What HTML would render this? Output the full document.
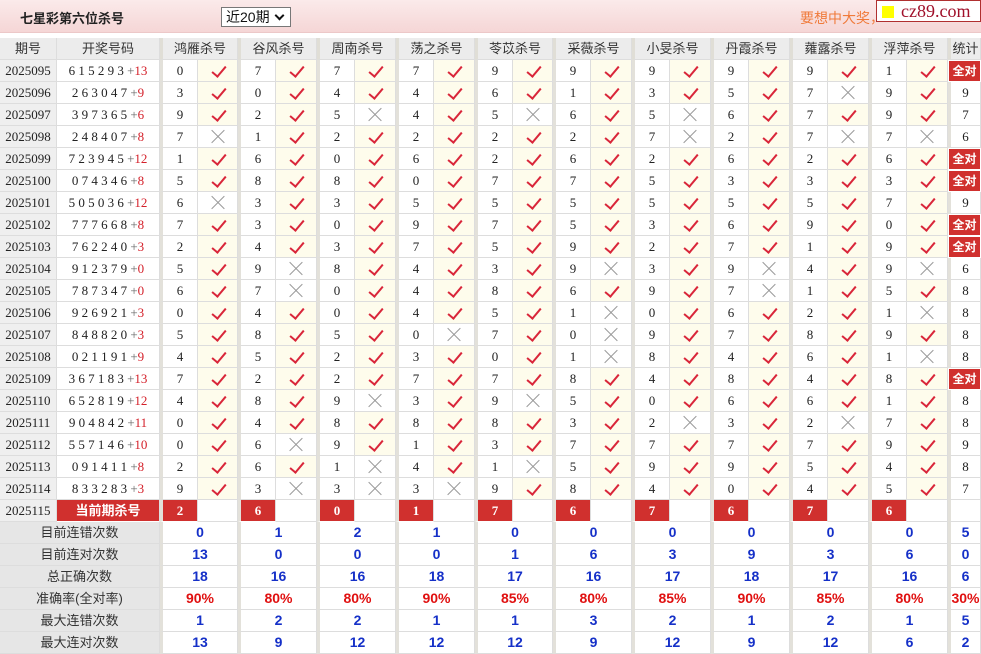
<!DOCTYPE html>
<html><head><meta charset="utf-8">
<style>
*{margin:0;padding:0}
body{width:981px;height:654px;overflow:hidden;background:#fff;font-family:"Liberation Sans","Noto Sans CJK SC",sans-serif;position:relative}
.top{position:absolute;left:0;top:0;width:981px;height:33px;background:linear-gradient(#fbeaea,#f5d6d6);border-bottom:1px solid #ecc8c8;box-sizing:border-box}
.title{position:absolute;left:20px;top:8px;font-size:13px;font-weight:bold;color:#222}
.sel{position:absolute;left:221px;top:7px;width:70px;height:20px;box-sizing:border-box;border:1px solid #777;background:#fff;font-size:14px;line-height:18px;padding-left:4px;color:#111}
.sel:after{content:"";position:absolute;right:7px;top:4px;width:5px;height:5px;border:solid #111;border-width:0 2px 2px 0;transform:rotate(45deg)}
.ad{position:absolute;left:800px;top:8px;font-size:14px;color:#f07a3a}
.logo{position:absolute;left:876px;top:0;width:105px;height:22px;box-sizing:border-box;border:1px solid #b03030;background:#fff;font:18px "Liberation Serif",serif;color:#a0102a;line-height:20px;padding-left:24px}
.logo:before{content:"";position:absolute;left:5px;top:5px;width:12px;height:12px;background:#ff0}
.tb{position:absolute;left:0;top:38px}
.r{display:grid;grid-template-columns:57px 103px 38px 40px 38px 41px 38px 41px 38px 41px 38px 40px 38px 41px 38px 41px 38px 41px 38px 41px 38px 41px 33px;height:22px}
.r>i{font-style:normal;box-sizing:border-box;border-right:1px solid #ddd;border-bottom:1px solid #ddd;height:22px;line-height:21px;text-align:center;font-size:13px;font-family:"Liberation Serif","Noto Serif CJK SC",serif;color:#222;position:relative;overflow:hidden;white-space:pre}
.h>i{background:#ececec;font-family:"Liberation Sans","Noto Sans CJK SC",sans-serif!important;color:#333}
.h>i.g{grid-column:span 2;border-left:3px solid #e0ded6}
.h>i.t{border-left:3px solid #e0ded6}
.p{background:#efefef}
.k{letter-spacing:0}
.k em{font-style:normal;color:#d4202a}
.k s{text-decoration:none;color:#666}
.n{border-left:3px solid #e3e1da}
.y{background:#fefcec}
.y:after{content:"";position:absolute;left:17px;top:3px;width:6px;height:12px;border:solid #d9263a;border-width:0 2px 2px 0;transform:rotate(40deg)}
.x:before,.x:after{content:"";position:absolute;left:11px;top:10px;width:18px;height:1px;background:#9a9a9a;transform:rotate(45deg)}
.x:after{transform:rotate(-45deg)}
.s{border-left:3px solid #e3e1da}
.q{background:#d0302e!important;color:#fff!important;font-weight:bold;font-family:"Liberation Sans","Noto Sans CJK SC",sans-serif!important;font-size:12px!important;border:1px solid #fff!important}
.c{background:#d0302e!important;color:#fff!important;font-weight:bold;border-bottom:1px solid #fff!important}
.kc{font-family:"Liberation Sans","Noto Sans CJK SC",sans-serif!important}
.st>i{font-family:"Liberation Sans",sans-serif!important;font-weight:bold;color:#1530c8!important;font-size:14px!important;grid-column:span 2}
.st>i.lb{background:#e6e6e6;color:#333!important;font-weight:normal;font-family:"Liberation Sans","Noto Sans CJK SC",sans-serif!important;font-size:13px!important}
.st>i.v{border-left:3px solid #e3e1da}
.st>i.z{grid-column:span 1;border-left:3px solid #e3e1da}
.rd>i.v,.rd>i.z{color:#e01010!important}
</style></head><body>
<div class="top"><div class="title">七星彩第六位杀号</div><div class="sel">近20期</div><div class="ad">要想中大奖，</div><div class="logo">cz89.com</div></div>
<div class="tb">
<div class="r h"><i>期号</i><i>开奖号码</i><i class="g">鸿雁杀号</i><i class="g">谷风杀号</i><i class="g">周南杀号</i><i class="g">荡之杀号</i><i class="g">苓苡杀号</i><i class="g">采薇杀号</i><i class="g">小旻杀号</i><i class="g">丹霞杀号</i><i class="g">蕹露杀号</i><i class="g">浮萍杀号</i><i class="t">统计</i></div>
<div class="r"><i class="p">2025095</i><i class="k">6 1 5 2 9 3 <s>+</s><em>13</em></i><i class="n">0</i><i class="y"></i><i class="n">7</i><i class="y"></i><i class="n">7</i><i class="y"></i><i class="n">7</i><i class="y"></i><i class="n">9</i><i class="y"></i><i class="n">9</i><i class="y"></i><i class="n">9</i><i class="y"></i><i class="n">9</i><i class="y"></i><i class="n">9</i><i class="y"></i><i class="n">1</i><i class="y"></i><i class="s q">全对</i></div>
<div class="r"><i class="p">2025096</i><i class="k">2 6 3 0 4 7 <s>+</s><em>9</em></i><i class="n">3</i><i class="y"></i><i class="n">0</i><i class="y"></i><i class="n">4</i><i class="y"></i><i class="n">4</i><i class="y"></i><i class="n">6</i><i class="y"></i><i class="n">1</i><i class="y"></i><i class="n">3</i><i class="y"></i><i class="n">5</i><i class="y"></i><i class="n">7</i><i class="x"></i><i class="n">9</i><i class="y"></i><i class="s">9</i></div>
<div class="r"><i class="p">2025097</i><i class="k">3 9 7 3 6 5 <s>+</s><em>6</em></i><i class="n">9</i><i class="y"></i><i class="n">2</i><i class="y"></i><i class="n">5</i><i class="x"></i><i class="n">4</i><i class="y"></i><i class="n">5</i><i class="x"></i><i class="n">6</i><i class="y"></i><i class="n">5</i><i class="x"></i><i class="n">6</i><i class="y"></i><i class="n">7</i><i class="y"></i><i class="n">9</i><i class="y"></i><i class="s">7</i></div>
<div class="r"><i class="p">2025098</i><i class="k">2 4 8 4 0 7 <s>+</s><em>8</em></i><i class="n">7</i><i class="x"></i><i class="n">1</i><i class="y"></i><i class="n">2</i><i class="y"></i><i class="n">2</i><i class="y"></i><i class="n">2</i><i class="y"></i><i class="n">2</i><i class="y"></i><i class="n">7</i><i class="x"></i><i class="n">2</i><i class="y"></i><i class="n">7</i><i class="x"></i><i class="n">7</i><i class="x"></i><i class="s">6</i></div>
<div class="r"><i class="p">2025099</i><i class="k">7 2 3 9 4 5 <s>+</s><em>12</em></i><i class="n">1</i><i class="y"></i><i class="n">6</i><i class="y"></i><i class="n">0</i><i class="y"></i><i class="n">6</i><i class="y"></i><i class="n">2</i><i class="y"></i><i class="n">6</i><i class="y"></i><i class="n">2</i><i class="y"></i><i class="n">6</i><i class="y"></i><i class="n">2</i><i class="y"></i><i class="n">6</i><i class="y"></i><i class="s q">全对</i></div>
<div class="r"><i class="p">2025100</i><i class="k">0 7 4 3 4 6 <s>+</s><em>8</em></i><i class="n">5</i><i class="y"></i><i class="n">8</i><i class="y"></i><i class="n">8</i><i class="y"></i><i class="n">0</i><i class="y"></i><i class="n">7</i><i class="y"></i><i class="n">7</i><i class="y"></i><i class="n">5</i><i class="y"></i><i class="n">3</i><i class="y"></i><i class="n">3</i><i class="y"></i><i class="n">3</i><i class="y"></i><i class="s q">全对</i></div>
<div class="r"><i class="p">2025101</i><i class="k">5 0 5 0 3 6 <s>+</s><em>12</em></i><i class="n">6</i><i class="x"></i><i class="n">3</i><i class="y"></i><i class="n">3</i><i class="y"></i><i class="n">5</i><i class="y"></i><i class="n">5</i><i class="y"></i><i class="n">5</i><i class="y"></i><i class="n">5</i><i class="y"></i><i class="n">5</i><i class="y"></i><i class="n">5</i><i class="y"></i><i class="n">7</i><i class="y"></i><i class="s">9</i></div>
<div class="r"><i class="p">2025102</i><i class="k">7 7 7 6 6 8 <s>+</s><em>8</em></i><i class="n">7</i><i class="y"></i><i class="n">3</i><i class="y"></i><i class="n">0</i><i class="y"></i><i class="n">9</i><i class="y"></i><i class="n">7</i><i class="y"></i><i class="n">5</i><i class="y"></i><i class="n">3</i><i class="y"></i><i class="n">6</i><i class="y"></i><i class="n">9</i><i class="y"></i><i class="n">0</i><i class="y"></i><i class="s q">全对</i></div>
<div class="r"><i class="p">2025103</i><i class="k">7 6 2 2 4 0 <s>+</s><em>3</em></i><i class="n">2</i><i class="y"></i><i class="n">4</i><i class="y"></i><i class="n">3</i><i class="y"></i><i class="n">7</i><i class="y"></i><i class="n">5</i><i class="y"></i><i class="n">9</i><i class="y"></i><i class="n">2</i><i class="y"></i><i class="n">7</i><i class="y"></i><i class="n">1</i><i class="y"></i><i class="n">9</i><i class="y"></i><i class="s q">全对</i></div>
<div class="r"><i class="p">2025104</i><i class="k">9 1 2 3 7 9 <s>+</s><em>0</em></i><i class="n">5</i><i class="y"></i><i class="n">9</i><i class="x"></i><i class="n">8</i><i class="y"></i><i class="n">4</i><i class="y"></i><i class="n">3</i><i class="y"></i><i class="n">9</i><i class="x"></i><i class="n">3</i><i class="y"></i><i class="n">9</i><i class="x"></i><i class="n">4</i><i class="y"></i><i class="n">9</i><i class="x"></i><i class="s">6</i></div>
<div class="r"><i class="p">2025105</i><i class="k">7 8 7 3 4 7 <s>+</s><em>0</em></i><i class="n">6</i><i class="y"></i><i class="n">7</i><i class="x"></i><i class="n">0</i><i class="y"></i><i class="n">4</i><i class="y"></i><i class="n">8</i><i class="y"></i><i class="n">6</i><i class="y"></i><i class="n">9</i><i class="y"></i><i class="n">7</i><i class="x"></i><i class="n">1</i><i class="y"></i><i class="n">5</i><i class="y"></i><i class="s">8</i></div>
<div class="r"><i class="p">2025106</i><i class="k">9 2 6 9 2 1 <s>+</s><em>3</em></i><i class="n">0</i><i class="y"></i><i class="n">4</i><i class="y"></i><i class="n">0</i><i class="y"></i><i class="n">4</i><i class="y"></i><i class="n">5</i><i class="y"></i><i class="n">1</i><i class="x"></i><i class="n">0</i><i class="y"></i><i class="n">6</i><i class="y"></i><i class="n">2</i><i class="y"></i><i class="n">1</i><i class="x"></i><i class="s">8</i></div>
<div class="r"><i class="p">2025107</i><i class="k">8 4 8 8 2 0 <s>+</s><em>3</em></i><i class="n">5</i><i class="y"></i><i class="n">8</i><i class="y"></i><i class="n">5</i><i class="y"></i><i class="n">0</i><i class="x"></i><i class="n">7</i><i class="y"></i><i class="n">0</i><i class="x"></i><i class="n">9</i><i class="y"></i><i class="n">7</i><i class="y"></i><i class="n">8</i><i class="y"></i><i class="n">9</i><i class="y"></i><i class="s">8</i></div>
<div class="r"><i class="p">2025108</i><i class="k">0 2 1 1 9 1 <s>+</s><em>9</em></i><i class="n">4</i><i class="y"></i><i class="n">5</i><i class="y"></i><i class="n">2</i><i class="y"></i><i class="n">3</i><i class="y"></i><i class="n">0</i><i class="y"></i><i class="n">1</i><i class="x"></i><i class="n">8</i><i class="y"></i><i class="n">4</i><i class="y"></i><i class="n">6</i><i class="y"></i><i class="n">1</i><i class="x"></i><i class="s">8</i></div>
<div class="r"><i class="p">2025109</i><i class="k">3 6 7 1 8 3 <s>+</s><em>13</em></i><i class="n">7</i><i class="y"></i><i class="n">2</i><i class="y"></i><i class="n">2</i><i class="y"></i><i class="n">7</i><i class="y"></i><i class="n">7</i><i class="y"></i><i class="n">8</i><i class="y"></i><i class="n">4</i><i class="y"></i><i class="n">8</i><i class="y"></i><i class="n">4</i><i class="y"></i><i class="n">8</i><i class="y"></i><i class="s q">全对</i></div>
<div class="r"><i class="p">2025110</i><i class="k">6 5 2 8 1 9 <s>+</s><em>12</em></i><i class="n">4</i><i class="y"></i><i class="n">8</i><i class="y"></i><i class="n">9</i><i class="x"></i><i class="n">3</i><i class="y"></i><i class="n">9</i><i class="x"></i><i class="n">5</i><i class="y"></i><i class="n">0</i><i class="y"></i><i class="n">6</i><i class="y"></i><i class="n">6</i><i class="y"></i><i class="n">1</i><i class="y"></i><i class="s">8</i></div>
<div class="r"><i class="p">2025111</i><i class="k">9 0 4 8 4 2 <s>+</s><em>11</em></i><i class="n">0</i><i class="y"></i><i class="n">4</i><i class="y"></i><i class="n">8</i><i class="y"></i><i class="n">8</i><i class="y"></i><i class="n">8</i><i class="y"></i><i class="n">3</i><i class="y"></i><i class="n">2</i><i class="x"></i><i class="n">3</i><i class="y"></i><i class="n">2</i><i class="x"></i><i class="n">7</i><i class="y"></i><i class="s">8</i></div>
<div class="r"><i class="p">2025112</i><i class="k">5 5 7 1 4 6 <s>+</s><em>10</em></i><i class="n">0</i><i class="y"></i><i class="n">6</i><i class="x"></i><i class="n">9</i><i class="y"></i><i class="n">1</i><i class="y"></i><i class="n">3</i><i class="y"></i><i class="n">7</i><i class="y"></i><i class="n">7</i><i class="y"></i><i class="n">7</i><i class="y"></i><i class="n">7</i><i class="y"></i><i class="n">9</i><i class="y"></i><i class="s">9</i></div>
<div class="r"><i class="p">2025113</i><i class="k">0 9 1 4 1 1 <s>+</s><em>8</em></i><i class="n">2</i><i class="y"></i><i class="n">6</i><i class="y"></i><i class="n">1</i><i class="x"></i><i class="n">4</i><i class="y"></i><i class="n">1</i><i class="x"></i><i class="n">5</i><i class="y"></i><i class="n">9</i><i class="y"></i><i class="n">9</i><i class="y"></i><i class="n">5</i><i class="y"></i><i class="n">4</i><i class="y"></i><i class="s">8</i></div>
<div class="r"><i class="p">2025114</i><i class="k">8 3 3 2 8 3 <s>+</s><em>3</em></i><i class="n">9</i><i class="y"></i><i class="n">3</i><i class="x"></i><i class="n">3</i><i class="x"></i><i class="n">3</i><i class="x"></i><i class="n">9</i><i class="y"></i><i class="n">8</i><i class="y"></i><i class="n">4</i><i class="y"></i><i class="n">0</i><i class="y"></i><i class="n">4</i><i class="y"></i><i class="n">5</i><i class="y"></i><i class="s">7</i></div>
<div class="r"><i class="p">2025115</i><i class="k kc c">当前期杀号</i><i class="n c">2</i><i></i><i class="n c">6</i><i></i><i class="n c">0</i><i></i><i class="n c">1</i><i></i><i class="n c">7</i><i></i><i class="n c">6</i><i></i><i class="n c">7</i><i></i><i class="n c">6</i><i></i><i class="n c">7</i><i></i><i class="n c">6</i><i></i><i class="s"></i></div>
<div class="r st"><i class="lb">目前连错次数</i><i class="v">0</i><i class="v">1</i><i class="v">2</i><i class="v">1</i><i class="v">0</i><i class="v">0</i><i class="v">0</i><i class="v">0</i><i class="v">0</i><i class="v">0</i><i class="z">5</i></div>
<div class="r st"><i class="lb">目前连对次数</i><i class="v">13</i><i class="v">0</i><i class="v">0</i><i class="v">0</i><i class="v">1</i><i class="v">6</i><i class="v">3</i><i class="v">9</i><i class="v">3</i><i class="v">6</i><i class="z">0</i></div>
<div class="r st"><i class="lb">总正确次数</i><i class="v">18</i><i class="v">16</i><i class="v">16</i><i class="v">18</i><i class="v">17</i><i class="v">16</i><i class="v">17</i><i class="v">18</i><i class="v">17</i><i class="v">16</i><i class="z">6</i></div>
<div class="r st rd"><i class="lb">准确率(全对率)</i><i class="v">90%</i><i class="v">80%</i><i class="v">80%</i><i class="v">90%</i><i class="v">85%</i><i class="v">80%</i><i class="v">85%</i><i class="v">90%</i><i class="v">85%</i><i class="v">80%</i><i class="z">30%</i></div>
<div class="r st"><i class="lb">最大连错次数</i><i class="v">1</i><i class="v">2</i><i class="v">2</i><i class="v">1</i><i class="v">1</i><i class="v">3</i><i class="v">2</i><i class="v">1</i><i class="v">2</i><i class="v">1</i><i class="z">5</i></div>
<div class="r st"><i class="lb">最大连对次数</i><i class="v">13</i><i class="v">9</i><i class="v">12</i><i class="v">12</i><i class="v">12</i><i class="v">9</i><i class="v">12</i><i class="v">9</i><i class="v">12</i><i class="v">6</i><i class="z">2</i></div>
</div>
</body></html>
